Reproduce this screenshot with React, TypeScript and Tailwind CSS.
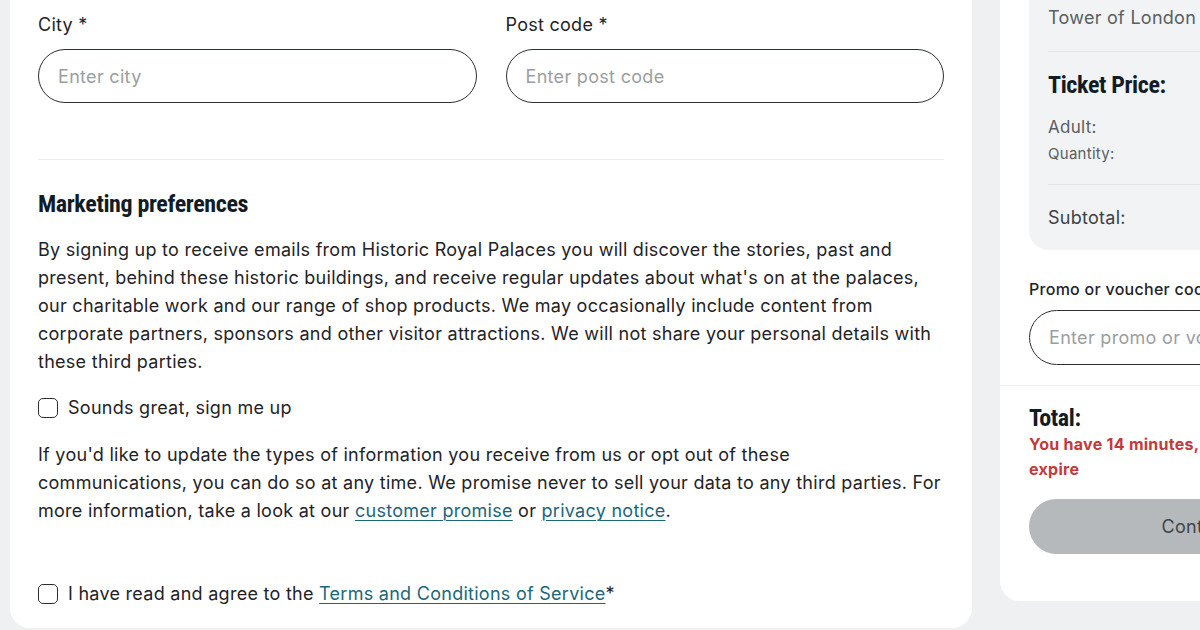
import React from "react";

const body = { fontFamily: "Inter, 'Noto Sans', sans-serif" };
const head = { fontFamily: "Roboto, 'Liberation Sans', sans-serif" };

function Field({ label, placeholder }: { label: string; placeholder: string }) {
  return (
    <div className="flex flex-col">
      <label className="text-[18px] leading-[28px] text-[#1f2326]">{label}</label>
      <input
        type="text"
        placeholder={placeholder}
        className="mt-[10px] h-[54px] rounded-full border-[1.5px] border-[#2b2f33] px-[19px] text-[18px] tracking-[0.017em] text-[#1f2326] placeholder:text-[#9b9ea1] outline-none"
      />
    </div>
  );
}

function Check({ children }: { children: React.ReactNode }) {
  return (
    <label className="flex items-center gap-[10px] text-[18px] leading-[28px] text-[#1f2326]">
      <span className="h-[20px] w-[20px] shrink-0 rounded-[5px] border-[1.5px] border-[#2b2f33] bg-white" />
      <span>{children}</span>
    </label>
  );
}

const linkCls = "text-[#1c6679] underline underline-offset-[3px] decoration-[1px]";
const headCls = "text-[24px] leading-[28px] font-bold tracking-[-0.015em] text-[#121c26] [font-stretch:condensed]";

export default function App() {
  return (
    <div
      className="flex h-[630px] w-[1200px] gap-[28px] overflow-hidden bg-[#eef0f1] pl-[10px] tracking-[0.017em]"
      style={body}
    >
      {/* left: form */}
      <div className="flex h-[628px] w-[962px] shrink-0 flex-col rounded-b-[20px] bg-white px-[28px] pt-[11px]">
        <div className="grid grid-cols-2 gap-[29px]">
          <Field label="City *" placeholder="Enter city" />
          <Field label="Post code *" placeholder="Enter post code" />
        </div>

        <div className="mt-[56px] border-t border-[#ececec]" />

        <h2 className={`mt-[30px] ${headCls}`} style={head}>
          Marketing preferences
        </h2>

        <p className="mt-[18px] text-[18px] leading-[28px] text-[#1f2326]">
          By signing up to receive emails from Historic Royal Palaces you will discover the stories, past and
          present, behind these historic buildings, and receive regular updates about what's on at the palaces,
          our charitable work and our range of shop products. We may occasionally include content from
          corporate partners, sponsors and other visitor attractions. We will not share your personal details with
          these third parties.
        </p>

        <div className="mt-[18px]">
          <Check>Sounds great, sign me up</Check>
        </div>

        <p className="mt-[19px] text-[18px] leading-[28px] text-[#1f2326]">
          If you'd like to update the types of information you receive from us or opt out of these
          communications, you can do so at any time. We promise never to sell your data to any third parties. For
          more information, take a look at our <a className={linkCls}>customer promise</a> or{" "}
          <a className={linkCls}>privacy notice</a>.
        </p>

        <div className="mt-[55px]">
          <Check>
            I have read and agree to the <a className={linkCls}>Terms and Conditions of Service</a>*
          </Check>
        </div>
      </div>

      {/* right: summary */}
      <div className="flex h-[601px] w-[402px] shrink-0 flex-col rounded-b-[20px] bg-white">
        <div className="mx-[29px] rounded-b-[20px] bg-[#f2f3f4] px-[19px] pb-[18px] pt-[4px]">
          <div className="border-b border-[#e3e5e7] pb-[19px] text-[18px] leading-[28px] text-[#5a5e62]">
            Tower of London
          </div>
          <div className="border-b border-[#e3e5e7] pb-[20px]">
            <h3 className={`mt-[19px] ${headCls}`} style={head}>
              Ticket Price:
            </h3>
            <div className="mt-[16px] text-[17px] leading-[24px] text-[#5a5e62]">Adult:</div>
            <div className="mt-[5px] text-[15px] leading-[20px] text-[#5a5e62]">Quantity:</div>
          </div>
          <div className="pt-[19px] text-[18px] leading-[28px] text-[#3d4145]">Subtotal:</div>
        </div>

        <div className="px-[29px] pt-[29px]">
          <div className="text-[16px] leading-[20px] font-medium text-[#1f2326]">Promo or voucher code</div>
          <input
            type="text"
            placeholder="Enter promo or voucher code"
            className="mt-[11px] h-[55px] w-full rounded-full border-[1.5px] border-[#2b2f33] px-[19px] text-[18px] tracking-[0.017em] placeholder:text-[#9b9ea1] outline-none"
          />
        </div>

        <div className="mt-[20px] border-t border-[#eceeef] px-[29px] pt-[18px]">
          <h3 className={headCls} style={head}>
            Total:
          </h3>
          <p className="text-[16px] leading-[25px] font-bold text-[#c23a3a]">
            <span className="whitespace-nowrap">You have 14 minutes, 52 seconds before your tickets</span>
            <br />
            expire
          </p>
          <button className="mt-[17px] h-[55px] w-full rounded-full bg-[#b6b9bc] text-[18px] tracking-[0.017em] text-[#3f4448]">
            Continue
          </button>
        </div>
      </div>
    </div>
  );
}
